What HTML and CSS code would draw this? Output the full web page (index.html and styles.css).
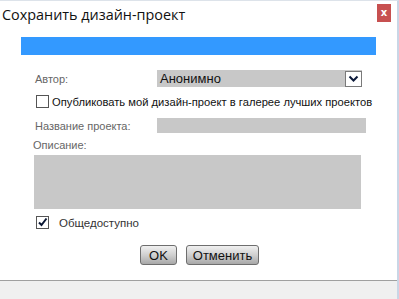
FILE: index.html
```html
<!DOCTYPE html>
<html lang="ru">
  <head>
    <meta charset="UTF-8" />
    <title>Сохранить дизайн-проект</title>
    <link rel="stylesheet" href="styles.css">
  </head>
  <body>
    <div class="window">
      <header class="titlebar">
        <span class="title">Сохранить дизайн-проект</span>
        <button class="close">x</button>
      </header>

      <section class="content">
        <div class="progress"></div>

        <div class="row author">
          <span class="label">Автор:</span>
          <div class="select">
            <span>Анонимно</span>
            <span class="arrow">
              <svg width="11" height="8" viewBox="0 0 11 8">
                <path d="M1.5 1.5 L5.5 5.5 L9.5 1.5" fill="none" stroke="#0b1a3a" stroke-width="2" />
              </svg>
            </span>
          </div>
        </div>

        <label class="check publish">
          <span class="box"></span>
          Опубликовать мой дизайн-проект в галерее лучших проектов
        </label>

        <div class="row name">
          <span class="label">Название проекта:</span>
          <div class="field"></div>
        </div>

        <div class="label desc-label">Описание:</div>
        <div class="textarea"></div>

        <label class="check public">
          <span class="box">
            <svg width="11" height="11" viewBox="0 0 11 11">
              <path d="M2 5.5 L4.5 8 L9.5 1.5" fill="none" stroke="#0a1633" stroke-width="2" />
            </svg>
          </span>
          <span class="public-text">Общедоступно</span>
        </label>

        <div class="buttons">
          <button class="btn ok">OK</button>
          <button class="btn cancel">Отменить</button>
        </div>
      </section>

      <footer class="statusbar"></footer>
    </div>
  </body>
</html>
```

FILE: styles.css
```css
* {
  box-sizing: border-box;
  --blue: #3399ff;
  --field: #c8c8c8;
  --label: #666;
}

body {
  margin: 0;
  background-color: white;
  font-family: "Liberation Sans", Arial, sans-serif;
}

.window {
  width: 399px;
  height: 299px;
  display: flex;
  flex-direction: column;
  border-top: 1px solid #dde3ea;
  border-right: 2px solid #c9d6e6;
}

.titlebar {
  height: 29px;
  display: flex;
  justify-content: space-between;
  align-items: flex-start;
  padding-left: 2px;
}

.title {
  font-family: "Open Sans", "Noto Sans", sans-serif;
  font-size: 14.4px;
  color: #111;
  margin-top: 4px;
}

.close {
  width: 14px;
  height: 18px;
  margin-top: 3px;
  margin-right: 6px;
  padding: 0;
  border: none;
  background-color: #c75050;
  color: white;
  font-family: "DejaVu Sans", sans-serif;
  font-weight: bold;
  font-size: 10px;
  line-height: 16px;
}

.content {
  flex: 1;
  padding: 7px 0 0 21px;
  font-size: 11.2px;
}

.progress {
  width: 355px;
  height: 18px;
  background-color: var(--blue);
  margin-bottom: 15px;
}

.row {
  display: flex;
  align-items: center;
}

.label {
  color: var(--label);
  font-size: 11px;
}

.author .label {
  width: 136px;
  padding-left: 14px;
}

.select {
  width: 205px;
  height: 17px;
  background-color: var(--field);
  display: flex;
  justify-content: space-between;
  align-items: center;
  padding-left: 3px;
  font-size: 13px;
  color: #111;
}

.arrow {
  width: 17px;
  height: 16px;
  background-color: white;
  border: 1px solid #7a7a7a;
  display: flex;
  align-items: center;
  justify-content: center;
}

.check {
  display: flex;
  align-items: center;
  gap: 3px;
  padding-left: 15px;
}

.box {
  width: 13px;
  height: 13px;
  border: 1px solid #555;
  background-color: white;
  display: flex;
  align-items: center;
  justify-content: center;
}

.publish {
  margin-top: 8px;
  color: #111;
}

.name {
  margin-top: 10px;
}

.name .label {
  width: 136px;
  padding-left: 14px;
}

.field {
  width: 209px;
  height: 15px;
  background-color: var(--field);
}

.desc-label {
  margin-top: 6px;
  padding-left: 12px;
}

.textarea {
  width: 327px;
  height: 54px;
  margin: 4px 0 0 13px;
  background-color: var(--field);
}

.public {
  margin-top: 7px;
  gap: 10px;
}

.public-text {
  color: #333;
  font-size: 11.5px;
}

.buttons {
  display: flex;
  gap: 9px;
  margin: 16px 0 0 119px;
}

.btn {
  height: 20px;
  padding: 0;
  border: 1px solid #6e6e6e;
  border-radius: 3px;
  background: linear-gradient(#f0f0f0, #d0d0d0 50%, #a8a8a8);
  font-size: 13px;
  color: #111;
}

.ok {
  width: 37px;
}

.cancel {
  width: 73px;
}

.statusbar {
  height: 19px;
  border-top: 1px solid #a0a0a0;
  background-color: #f0f0f0;
}
```
